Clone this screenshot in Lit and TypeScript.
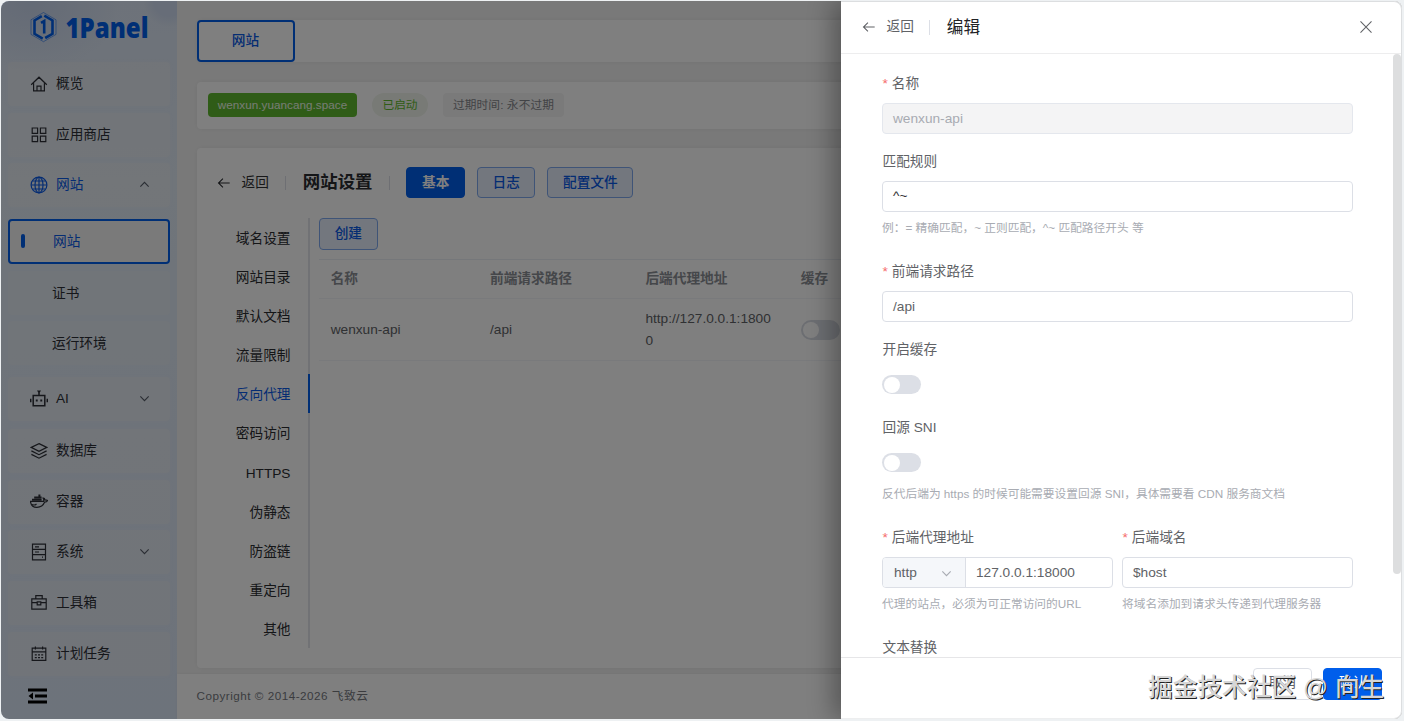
import { LitElement, html, css, svg, TemplateResult } from "lit";
import { customElement, property } from "lit/decorators.js";

const ICONS: Record<string, TemplateResult> = {
  home: svg`<path d="M1.2 9.8 9 2.2l7.800 7.600M3.600 8.200v7.600h10.800V8.200M7 15.600v-4.400h4v4.400"/>`,
  grid: svg`<path d="M2.200 2h5.400v5.400H2.200zM10.400 2h5.400v5.400h-5.400zM2.200 10.200h5.400v5.400H2.200zM10.400 10.200h5.400v5.400h-5.400z"/>`,
  globe: svg`<circle cx="9" cy="9" r="7.900"/><ellipse cx="9" cy="9" rx="4" ry="7.900"/><path d="M9 1.100v15.800M1.100 9h15.800M2.500 5h13M2.500 13h13"/>`,
  robot: svg`<path d="M3.200 5.400h11.600v10.400H3.200zM9 5.400V2.400M.7 8.800v3.400M17.300 8.800v3.400" stroke-width="1.500"/><path d="M7 .6h4L9 3.800zM5.800 9.400h1.900v2H5.800zM10.300 9.400h1.900v2h-1.900z" fill="currentColor" stroke="none"/>`,
  layers: svg`<path d="m9 1.600 7.800 3.800L9 9.400 1.200 5.400zM1.400 8.900 9 12.700l7.600-3.800M1.400 12.400 9 16.200l7.600-3.800"/>`,
  whale: svg`<path d="M.4 8.300h13.200c.4-1.200.2-2.300-.5-3.200 1.100-.2 1.700.8 1.900 1.800 1 0 2 .1 2.600.5-.5 1.200-1.600 1.600-2.900 1.700-1.500 3.600-4 5.300-7.800 5.300C3 14.400.9 12 .4 8.300z"/><path d="M2 5.800h9.600v2H2zM4.200 3.600h7.400v2H4.200zM8.400 1.500h2v2h-2z" fill="currentColor" stroke="none"/><path d="M2 11.600c2 .8 3.400.4 4.500-.6"/>`,
  server: svg`<path d="M2.500 1.200h13v15.600h-13zM2.500 6.400h13M2.500 11.600h13M5 3.900h4M5 9h4M12 14.200h1"/>`,
  toolbox: svg`<path d="M1.800 4.900h14.400v10.300H1.800zM5.800 4.800V1.600h6.400v3.200M1.800 8.700h5.400M10.800 8.700h5.400M7.200 7.800h3.600v3H7.200z"/>`,
  calendar: svg`<path d="M2.200 3.200h13.600v12.200H2.200zM2.200 6.900h13.600M5.400 1.400v3.200M12.600 1.400v3.200"/><path d="M4.800 9.900h2M8 9.900h2M11.200 9.900h2M4.800 12.700h2M8 12.700h2M11.200 12.700h2"/>`,
  up: svg`<path d="m4.600 11.200 4.400-4.400 4.400 4.400"/>`,
  down: svg`<path d="m4.600 6.800 4.400 4.400 4.400-4.400"/>`,
  back: svg`<path d="M15.400 9H3M7.800 4 2.800 9l5 5"/>`,
  close: svg`<path d="m2.800 2.800 12.400 12.400M15.200 2.800 2.800 15.200"/>`,
};

@customElement("p-icon")
class PIcon extends LitElement {
  static styles = css`
    :host { display: inline-flex; width: 18px; height: 18px; flex: none; }
    svg { width: 100%; height: 100%; display: block; }
  `;
  @property() name = "";
  render() {
    return html`<svg viewBox="0 0 18 18" fill="none" stroke="currentColor" stroke-width="1.2">${ICONS[this.name]}</svg>`;
  }
}

@customElement("side-bar")
class SideBar extends LitElement {
  static styles = css`
    :host {
      display: flex; flex-direction: column; width: 176px; flex: none; box-sizing: border-box;
      background:
        radial-gradient(90px 70px at 30px 0, #c8d5ec 0, transparent 100%),
        radial-gradient(circle 26px at 168px 0, #cfdbf0 0 60%, transparent 100%),
        linear-gradient(180deg, #dbe5f4 0, #e0eaf5 25%, #dde7f5 60%, #dbe6f6 100%);
      color: #2c2f36;
    }
    .logo { height: 60.5px; padding: 0 0 0 28px; display: flex; align-items: flex-start; box-sizing: border-box; }
    .logo svg { display: block; margin-top: 7px; }
    nav { display: flex; flex-direction: column; padding: 0 7px 0 7px; flex: 1; }
    .item {
      height: 44px; box-sizing: border-box; display: flex; align-items: center;
      padding: 0 17px 0 22px; border-radius: 4px; background: rgba(240, 240, 240, .38);
      box-shadow: 0 0 3px rgba(240, 240, 240, .3);
    }
    .item span { margin-left: 8px; flex: 1; padding-top: 2px; }
    .g6 { margin-top: 6px; }
    .g7 { margin-top: 7px; }
    .g8 { margin-top: 8px; }
    .g12 { margin-top: 12px; }
    .on { color: #0a5ae6; }
    .sub { display: flex; flex-direction: column; margin-top: 12px; }
    .leaf { height: 44px; box-sizing: border-box; padding: 3px 0 0 44px; display: flex; align-items: center; background: rgba(240,240,240,.3); border-radius: 4px; }
    .leaf.active {
      height: 45px; border: 2px solid #005eeb; background: #f4f4f5; color: #0a5ae6; padding: 2px 0 0 11px; gap: 28px;
    }
    .mark { width: 4px; height: 14px; border-radius: 2px; background: #005eeb; margin-bottom: 2px; }
    .arrow { width: 17px; height: 17px; color: #555b66; }
    .foot { height: 42px; display: flex; align-items: center; padding: 0 0 3px 27px; box-sizing: border-box; color: #000; }
  `;
  render() {
    const item = (icon: string, text: string, cls = "", arrow = "") => html`
      <div class="item ${cls}"><p-icon name=${icon}></p-icon><span>${text}</span>
        ${arrow ? html`<p-icon class="arrow" name=${arrow}></p-icon>` : ""}</div>`;
    return html`
      <div class="logo">
        <svg width="124" height="40" viewBox="0 0 124 40">
          <g fill="none" stroke="#005eeb">
            <path d="M14.500 4.500 27 11.800v14.600L14.500 33.700 2 26.400V11.800z" stroke-width=".9" opacity=".55"/>
            <path d="M12.800 8.200 5.500 12.400v13.400l8.200 4.800M16.200 30 23.500 25.800V12.400l-8.200-4.800" stroke-width="2.600"/>
            <path d="M12 14.800 15.200 13v12.500" stroke-width="2.600"/>
          </g>
          <text x="36.500" y="30" font-family="'Noto Sans', sans-serif" font-weight="900" font-size="28" fill="#005eeb" textLength="83" lengthAdjust="spacingAndGlyphs">1Panel</text>
        </svg>
      </div>
      <nav>
        ${item("home", "概览")}
        ${item("grid", "应用商店", "g7")}
        ${item("globe", "网站", "g6 on", "up")}
        <div class="sub">
          <div class="leaf active"><i class="mark"></i>网站</div>
          <div class="leaf g7">证书</div>
          <div class="leaf g6">运行环境</div>
        </div>
        ${item("robot", "AI", "g12", "down")}
        ${item("layers", "数据库", "g8")}
        ${item("whale", "容器", "g7")}
        ${item("server", "系统", "g6", "down")}
        ${item("toolbox", "工具箱", "g7")}
        ${item("calendar", "计划任务", "g7")}
      </nav>
      <div class="foot">
        <svg width="20" height="18" viewBox="0 0 20 18" fill="currentColor"><path d="M0 1.500h19v3H0zM7 7.500h12v3H7zM0 13.500h19v3H0zM5 5.500v7L.5 9z"/></svg>
      </div>`;
  }
}

@customElement("site-page")
class SitePage extends LitElement {
  static styles = css`
    :host { display: flex; flex-direction: column; width: 1225px; flex: none; background: #f3f3f3; color: #2a2c30; box-sizing: border-box; }
    .card { margin-left: 19.5px; background: #ffffff; border-radius: 4px; box-shadow: 0 0 5px rgba(0,0,0,.06); box-sizing: border-box; }
    .top { margin-top: 19px; height: 42px; display: flex; }
    .tab { width: 98px; height: 42px; box-sizing: border-box; border: 2px solid #005eeb; border-radius: 4px; color: #0a5ae6; display: flex; align-items: center; justify-content: center; font-weight: 500; }
    .status { margin-top: 20px; height: 47px; display: flex; align-items: center; padding-left: 11.5px; padding-bottom: 2px; font-size: 11.7px; }
    .tag { height: 24px; box-sizing: border-box; display: flex; align-items: center; justify-content: center; border-radius: 4px; padding-top: 1px; }
    .domain { width: 149px; background: #5fb92e; color: #eef8e8; letter-spacing: .04px; }
    .run { width: 56px; margin-left: 15px; border-radius: 12px; background: #f0f5ec; color: #5fb92e; }
    .exp { width: 121px; margin-left: 15px; background: #f4f4f5; color: #85878c; letter-spacing: .1px; }
    .main { margin-top: 19px; height: 520px; padding-top: 18.5px; }
    .head { display: flex; align-items: center; height: 32px; padding-left: 19px; }
    .head p-icon { width: 16px; height: 16px; }
    .head .bk { margin-left: 10px; color: #303133; padding-top: 1px; }
    .bar { width: 1px; height: 14px; background: #dcdfe6; margin: 0 16.5px; }
    .head h1 { margin: 0; font-size: 17.4px; font-weight: 700; line-height: 24px; padding-bottom: 2px; }
    .btn { height: 31.5px; width: 58.7px; box-sizing: border-box; border: 1px solid #7fa9ee; border-radius: 4px; background: #e6effd; color: #0a5ae6; font-weight: 500; display: flex; align-items: center; justify-content: center; margin-right: 11.7px; padding-top: 1px; }
    .pri { background: #005eeb; border-color: #005eeb; color: #fff; font-weight: 700; }
    .wide { width: 86.3px; }
    .body { display: flex; margin-top: 19.5px; }
    .menu { width: 113.5px; box-sizing: border-box; border-right: 2px solid #e2e5ea; height: 430px; }
    .menu div { height: 39.1px; box-sizing: border-box; line-height: 37.1px; padding: 2px 17.5px 0 0; text-align: right; margin-right: -2px; border-right: 2px solid transparent; }
    .menu .cur { color: #0a5ae6; border-color: #005eeb; }
    .list { margin-left: 9px; flex: 1; }
    .table { margin-top: 9.5px; display: grid; grid-template-columns: 159.3px 155.4px 155.4px 1fr; border-top: 1px solid #ebeef5; color: #606266; }
    .table > div { padding: 1px 11.7px 0; box-sizing: border-box; display: flex; align-items: center; border-bottom: 1px solid #f3f4f8; line-height: 22.5px; }
    .th { height: 39px; font-weight: 700; color: #8b8e94; }
    .td { height: 62px; overflow-wrap: anywhere; color: #606266; }
    .sw { width: 39px; height: 19.5px; border-radius: 10px; background: #d9dce4; display: flex; align-items: center; padding-left: 2px; box-sizing: border-box; }
    .sw i { width: 16px; height: 16px; border-radius: 50%; background: #fff; }
    footer { margin-top: 5.5px; flex: 1; background: #ffffff; padding-left: 19.5px; display: flex; align-items: center; font-size: 11.7px; color: #76797f; letter-spacing: .5px; box-shadow: 0 -1px 3px rgba(0,0,0,.04); }
  `;
  render() {
    const tabs = ["域名设置", "网站目录", "默认文档", "流量限制", "反向代理", "密码访问", "HTTPS", "伪静态", "防盗链", "重定向", "其他"];
    return html`
      <div class="card top"><div class="tab">网站</div></div>
      <div class="card status">
        <div class="tag domain">wenxun.yuancang.space</div>
        <div class="tag run">已启动</div>
        <div class="tag exp">过期时间: 永不过期</div>
      </div>
      <div class="card main">
        <div class="head">
          <p-icon name="back"></p-icon><span class="bk">返回</span><i class="bar"></i>
          <h1>网站设置</h1><i class="bar"></i>
          <div class="btn pri">基本</div><div class="btn">日志</div><div class="btn wide">配置文件</div>
        </div>
        <div class="body">
          <div class="menu">${tabs.map((t) => html`<div class=${t === "反向代理" ? "cur" : ""}>${t}</div>`)}</div>
          <div class="list">
            <div class="btn">创建</div>
            <div class="table">
              ${["名称", "前端请求路径", "后端代理地址", "缓存"].map((t) => html`<div class="th">${t}</div>`)}
              <div class="td">wenxun-api</div><div class="td">/api</div>
              <div class="td">http://127.0.0.1:18000</div><div class="td"><span class="sw"><i></i></span></div>
            </div>
          </div>
        </div>
      </div>
      <footer>Copyright © 2014-2026 飞致云</footer>`;
  }
}

@customElement("edit-drawer")
class EditDrawer extends LitElement {
  static styles = css`
    :host { display: flex; flex-direction: column; background: #fff; color: #606266; box-shadow: -8px 0 24px rgba(0,0,0,.32); }
    header { height: 52.5px; box-sizing: border-box; flex: none; display: flex; align-items: center; padding: 1px 28px 0 19.5px; border-bottom: 1px solid #ededee; }
    header p-icon { width: 16px; height: 16px; }
    header .bk { margin-left: 10px; padding-top: 1px; }
    header .bar { width: 1px; height: 15px; margin: 0 17px 0 15px; background: #dcdfe6; }
    header h2 { margin: 0; flex: 1; font-size: 16.6px; font-weight: 400; color: #222326; line-height: 24px; padding-top: 1px; }
    .scroll { flex: 1; min-height: 0; overflow: hidden; display: flex; }
    form { width: 470.5px; margin-left: 41px; padding-top: 20px; flex: none; }
    .thumb { width: 8px; height: 520px; margin-left: 40.5px; border-radius: 4px; background: #dddedf; flex: none; }
    .f { margin-bottom: 17.5px; }
    .f.h { margin-bottom: 24.5px; }
    label { display: block; height: 20px; line-height: 20px; margin-bottom: 9.5px; padding-left: .5px; white-space: nowrap; }
    label b { color: #f56c6c; font-weight: 400; margin-right: 4px; }
    .in { height: 31px; box-sizing: border-box; border: 1px solid #dcdfe6; border-radius: 4px; display: flex; align-items: center; padding: 1px 10px 0; background: #fff; }
    .off { background: #f4f4f5; color: #a8abb2; border-color: #e4e7ed; }
    .rule { color: #303133; padding-top: 0; }
    .hint { height: 18px; line-height: 18px; margin-top: 7px; font-size: 11.72px; color: #a8abb2; white-space: nowrap; }
    .box { height: 31px; display: flex; align-items: center; }
    .sw { width: 39px; height: 19.5px; border-radius: 10px; background: #dcdfe6; display: flex; align-items: center; padding-left: 1.5px; box-sizing: border-box; }
    .sw i { width: 16px; height: 16px; border-radius: 50%; background: #fff; }
    .row { display: grid; grid-template-columns: 230.5px 230.5px; gap: 9.5px; }
    .combo { padding: 0; overflow: hidden; }
    .sel { width: 83px; height: 100%; box-sizing: border-box; background: #f5f7fa; border-right: 1px solid #dcdfe6; display: flex; align-items: center; justify-content: space-between; padding: 1px 10px 0 11px; margin-right: 10px; }
    .val { padding-top: 1px; }
    .sel p-icon { width: 17px; height: 17px; color: #a8abb2; }
    footer { height: 61.5px; box-sizing: border-box; flex: none; border-top: 1px solid #e6e6e8; display: flex; justify-content: flex-end; padding: 10px 20px 0 0; gap: 11px; }
    .btn { width: 59px; height: 31.5px; box-sizing: border-box; border: 1px solid #dcdfe6; border-radius: 4px; display: flex; align-items: center; justify-content: center; }
    .ok { background: #005eeb; border-color: #005eeb; color: #fff; }
  `;
  render() {
    const req = html`<b>*</b>`;
    return html`
      <header>
        <p-icon name="back"></p-icon><span class="bk">返回</span><i class="bar"></i><h2>编辑</h2>
        <p-icon name="close"></p-icon>
      </header>
      <div class="scroll">
        <form>
          <div class="f"><label>${req}名称</label><div class="in off">wenxun-api</div></div>
          <div class="f h"><label>匹配规则</label><div class="in rule">^~</div><div class="hint">例：= 精确匹配，~ 正则匹配，^~ 匹配路径开头 等</div></div>
          <div class="f"><label>${req}前端请求路径</label><div class="in">/api</div></div>
          <div class="f"><label>开启缓存</label><div class="box"><span class="sw"><i></i></span></div></div>
          <div class="f h"><label>回源 SNI</label><div class="box"><span class="sw"><i></i></span></div><div class="hint">反代后端为 https 的时候可能需要设置回源 SNI，具体需要看 CDN 服务商文档</div></div>
          <div class="row">
            <div class="f h"><label>${req}后端代理地址</label><div class="in combo"><span class="sel">http<p-icon name="down"></p-icon></span><span class="val">127.0.0.1:18000</span></div><div class="hint">代理的站点，必须为可正常访问的URL</div></div>
            <div class="f h"><label>${req}后端域名</label><div class="in">$host</div><div class="hint">将域名添加到请求头传递到代理服务器</div></div>
          </div>
          <div class="f"><label>文本替换</label></div>
        </form>
        <div class="thumb"></div>
      </div>
      <footer><div class="btn">取消</div><div class="btn ok">确认</div></footer>`;
  }
}

@customElement("app-root")
class AppRoot extends LitElement {
  static styles = css`
    :host {
      display: block; width: 1404px; height: 721px; overflow: hidden; position: relative; box-sizing: border-box;
      padding: 1px 2px 2.5px 1px; background: #eef1f3;
      font-family: "Liberation Sans", "Noto Sans CJK SC", sans-serif; font-size: 13.68px; line-height: 1.5;
    }
    .win { height: 717.5px; width: 1401px; position: relative; display: flex; overflow: hidden; border-radius: 8px; }
    .mask { position: absolute; inset: 0; background: rgba(0, 0, 0, .5); }
    edit-drawer { position: absolute; top: 0; bottom: 0; right: 0; width: 561px; }
    .edge { position: absolute; inset: 0; border: 1px solid #dcdee0; border-left: 0; border-radius: 8px; clip-path: inset(0 0 0 840px); }
    .credit {
      position: absolute; left: 1148px; top: 669.5px; font-size: 24.7px; line-height: 36px; white-space: nowrap; font-weight: 500;
      color: #d6d6d6; text-shadow: 1px 1px 0 #222;
    }
  `;
  render() {
    return html`
      <div class="win">
        <side-bar></side-bar>
        <site-page></site-page>
        <div class="mask"></div>
        <edit-drawer></edit-drawer>
        <div class="edge"></div>
      </div>
      <div class="credit">掘金技术社区 @ 向生</div>`;
  }
}
